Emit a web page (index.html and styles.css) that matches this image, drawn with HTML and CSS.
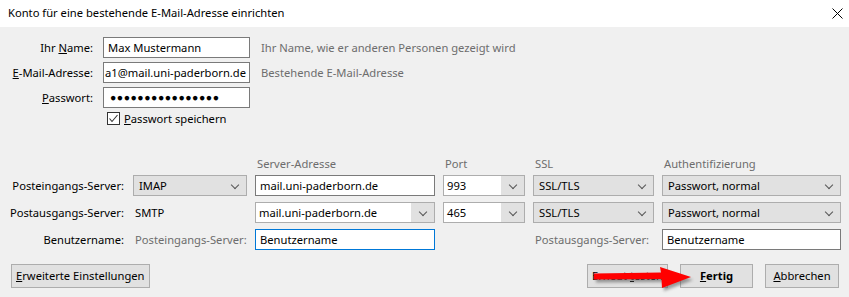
FILE: index.html
```html
<!DOCTYPE html>
<html lang="de">
<head>
    <meta charset="UTF-8">
    <title>Konto einrichten</title>
    <link rel="stylesheet" href="styles.css">
</head>
<body>
    <div class="dialog">
        <div class="titlebar">
            <span class="title">Konto für eine bestehende E-Mail-Adresse einrichten</span>
            <svg class="close" width="11" height="11" viewBox="0 0 11 11">
                <path d="M0.5 0.5 L10.5 10.5 M10.5 0.5 L0.5 10.5" stroke="#000" stroke-width="1" fill="none"/>
            </svg>
        </div>

        <div class="content">
            <div class="account">
                <label class="label">Ihr <u>N</u>ame:</label>
                <div class="field">Max Mustermann</div>
                <span class="hint">Ihr Name, wie er anderen Personen gezeigt wird</span>

                <label class="label"><u>E</u>-Mail-Adresse:</label>
                <div class="field scrolled">a1@mail.uni-paderborn.de</div>
                <span class="hint">Bestehende E-Mail-Adresse</span>

                <label class="label"><u>P</u>asswort:</label>
                <div class="field dots">&#9679;&#9679;&#9679;&#9679;&#9679;&#9679;&#9679;&#9679;&#9679;&#9679;&#9679;&#9679;&#9679;&#9679;&#9679;&#9679;</div>
                <span></span>
            </div>

            <div class="remember">
                <span class="checkbox">
                    <svg width="11" height="11" viewBox="0 0 11 11"><path d="M1.5 5.5 L4 8.5 L9.5 2" stroke="#333" stroke-width="1.1" fill="none"/></svg>
                </span>
                <span><u>P</u>asswort speichern</span>
            </div>

            <div class="server-head">
                <span></span>
                <span></span>
                <span class="col-title">Server-Adresse</span>
                <span class="col-title">Port</span>
                <span class="col-title">SSL</span>
                <span class="col-title">Authentifizierung</span>
            </div>

            <div class="servers">
                <span class="label">Posteingangs-Server:</span>
                <div class="select">IMAP<i class="chev"></i></div>
                <div class="field dark">mail.uni-paderborn.de</div>
                <div class="combo"><span class="combo-text">993</span><span class="combo-btn"><i class="chev"></i></span></div>
                <div class="select">SSL/TLS<i class="chev"></i></div>
                <div class="select">Passwort, normal<i class="chev"></i></div>

                <span class="label">Postausgangs-Server:</span>
                <span class="plain">SMTP</span>
                <div class="combo"><span class="combo-text">mail.uni-paderborn.de</span><span class="combo-btn"><i class="chev"></i></span></div>
                <div class="combo"><span class="combo-text">465</span><span class="combo-btn"><i class="chev"></i></span></div>
                <div class="select">SSL/TLS<i class="chev"></i></div>
                <div class="select">Passwort, normal<i class="chev"></i></div>

                <span class="label">Benutzername:</span>
                <span class="plain muted">Posteingangs-Server:</span>
                <div class="field focus">Benutzername</div>
                <span></span>
                <span class="plain muted">Postausgangs-Server:</span>
                <div class="field dark">Benutzername</div>
            </div>

            <div class="actions">
                <button class="btn"><u>E</u>rweiterte Einstellungen</button>
                <div class="right-buttons">
                    <button class="btn retest">Erneut <u>t</u>esten</button>
                    <button class="btn primary"><u>F</u>ertig</button>
                    <button class="btn abort"><u>A</u>bbrechen</button>
                    <svg class="arrow" width="110" height="38" viewBox="0 0 110 38">
                        <defs>
                            <filter id="shade" x="-10%" y="-30%" width="130%" height="180%">
                                <feGaussianBlur stdDeviation="1.6"/>
                            </filter>
                        </defs>
                        <path d="M3 13.5 L70 12.5 L69 7 L100 17 L71 28 L70.5 19 L3 19.5 Z" fill="#555" opacity="0.55" filter="url(#shade)" transform="translate(2 3)"/>
                        <path d="M3 13.5 L70 12.5 L69 7 L100 17 L71 28 L70.5 19 L3 19.5 Z" fill="#ff0000"/>
                    </svg>
                </div>
            </div>
        </div>
    </div>
</body>
</html>
```

FILE: styles.css
```css
* {
    box-sizing: border-box;
}
body {
    margin: 0;
    font-family: "Noto Sans", "Open Sans", sans-serif;
    font-size: 11.2px;
    color: #000;
    background: #f0f0f0;
}
.dialog {
    width: 849px;
    height: 297px;
    overflow: hidden;
}
.titlebar {
    height: 27px;
    background: #fff;
    display: flex;
    align-items: center;
    justify-content: space-between;
    padding: 0 6px 2px 8px;
}
.title {
    line-height: 16px;
}
.close {
    display: block;
    margin-top: 2px;
}
.content {
    padding-top: 10px;
}
.account {
    display: grid;
    grid-template-columns: 95px 147px auto;
    column-gap: 8px;
    row-gap: 4px;
    grid-auto-rows: 21px;
    align-items: center;
}
.label {
    text-align: right;
    white-space: nowrap;
}
.account .label {
    padding-right: 2px;
}
.hint {
    color: #6d6d6d;
    padding-left: 3px;
}
.field {
    height: 21px;
    background: #fff;
    border: 1px solid #7a7a7a;
    padding: 0 4px;
    line-height: 19px;
    white-space: nowrap;
    overflow: hidden;
}
.field.scrolled {
    text-align: right;
    padding: 0 3px 0 1px;
}
.dots {
    font-size: 10.5px;
    letter-spacing: 0.5px;
    padding-left: 6px;
}
.field.focus {
    border-color: #0078d7;
}
.remember {
    display: flex;
    align-items: center;
    gap: 4px;
    margin: 3px 0 0 107px;
    height: 14px;
}
.checkbox {
    width: 13px;
    height: 13px;
    border: 1px solid #333;
    background: #fff;
    display: flex;
    align-items: center;
    justify-content: center;
}
.checkbox svg {
    display: block;
}
.server-head,
.servers {
    display: grid;
    grid-template-columns: 125px 114px 180px 82px 121px 179px;
    column-gap: 8px;
}
.server-head {
    margin-top: 31px;
    height: 16px;
    line-height: 16px;
    margin-bottom: 3px;
}
.col-title {
    color: #6d6d6d;
    padding-left: 2px;
}
.servers {
    grid-auto-rows: 21px;
    row-gap: 6px;
    align-items: center;
}
.servers .label {
    padding-right: 1px;
}
.plain {
    padding-left: 2px;
    white-space: nowrap;
}
.muted {
    color: #6d6d6d;
}
.select {
    position: relative;
    height: 21px;
    background: #e1e1e1;
    border: 1px solid #adadad;
    line-height: 19px;
    padding-left: 5px;
    white-space: nowrap;
}
.chev {
    position: absolute;
    right: 8px;
    top: 6px;
    width: 6px;
    height: 6px;
    border-right: 1px solid #555;
    border-bottom: 1px solid #555;
    transform: rotate(45deg);
}
.combo {
    display: flex;
    height: 21px;
    border: 1px solid #adadad;
    background: #fff;
}
.combo-text {
    flex: 1;
    line-height: 19px;
    padding-left: 3px;
    white-space: nowrap;
    overflow: hidden;
}
.combo-btn {
    position: relative;
    width: 23px;
    background: #e1e1e1;
}
.combo-btn .chev {
    right: 8px;
}
.actions {
    display: flex;
    justify-content: space-between;
    margin-top: 14px;
    padding: 0 10px 0 11px;
}
.right-buttons {
    position: relative;
    display: flex;
    gap: 12px;
}
.btn {
    font-family: inherit;
    font-size: 11.2px;
    color: #000;
    height: 24px;
    background: #e1e1e1;
    border: 1px solid #adadad;
    padding: 0 4px;
    line-height: 22px;
    margin: 0;
    white-space: nowrap;
}
.retest {
    width: 81px;
}
.primary {
    width: 73px;
    font-weight: bold;
}
.abort {
    width: 74px;
}
.arrow {
    position: absolute;
    left: 4px;
    top: -4px;
}
```
